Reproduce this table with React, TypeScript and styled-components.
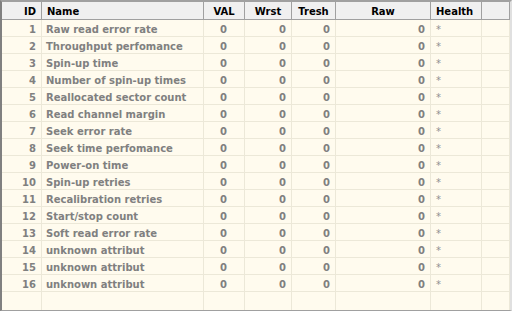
import React from "react";
import styled, { createGlobalStyle } from "styled-components";

const Global = createGlobalStyle`
  html, body { margin: 0; padding: 0; background: #f0f0f0; }
  body { width: 512px; height: 311px; overflow: hidden; }
`;

const COLS = "40px 162px 41px 47px 44px 95px 51px 1fr";

const Frame = styled.div`
  box-sizing: border-box;
  width: 512px;
  height: 311px;
  border-top: 2px solid #a0a0a0;
  border-left: 2px solid #808080;
  border-right: 2px solid #e0e0e0;
  border-bottom: 1px solid #a0a0a0;
  background: #fffbee;
  font-family: "DejaVu Sans", sans-serif;
  font-size: 10px;
  font-weight: bold;
  display: flex;
  flex-direction: column;
  overflow: hidden;
`;

const HeaderRow = styled.div`
  display: grid;
  grid-template-columns: ${COLS};
  height: 17px;
  background: #f0f0f0;
  border-bottom: 1px solid #a0a0a0;
`;

const HeadCell = styled.div<{ $align?: string }>`
  box-sizing: border-box;
  border-right: 1px solid #a0a0a0;
  color: #000;
  line-height: 17px;
  padding: 1px 5px 0;
  text-align: ${(p) => p.$align || "center"};
  white-space: nowrap;
  overflow: hidden;
`;

const Row = styled.div`
  display: grid;
  grid-template-columns: ${COLS};
  height: 17px;
  border-bottom: 1px solid #ece8d8;
  box-sizing: border-box;
`;

const Cell = styled.div<{ $align?: string }>`
  box-sizing: border-box;
  border-right: 1px solid #ece8d8;
  color: #808080;
  line-height: 12px;
  padding: 4px 5px 0 4px;
  text-align: ${(p) => p.$align || "right"};
  white-space: nowrap;
`;

const Star = styled.span`
  font-weight: normal;
  color: #909090;
  padding-left: 1px;
`;

const Filler = styled.div`
  flex: 1;
  display: grid;
  grid-template-columns: ${COLS};
`;

const FillCell = styled.div`
  border-right: 1px solid #ece8d8;
`;

const names = [
  "Raw read error rate",
  "Throughput perfomance",
  "Spin-up time",
  "Number of spin-up times",
  "Reallocated sector count",
  "Read channel margin",
  "Seek error rate",
  "Seek time perfomance",
  "Power-on time",
  "Spin-up retries",
  "Recalibration retries",
  "Start/stop count",
  "Soft read error rate",
  "unknown attribut",
  "unknown attribut",
  "unknown attribut",
];

export default function App() {
  return (
    <>
      <Global />
      <Frame>
        <HeaderRow>
          <HeadCell $align="right">ID</HeadCell>
          <HeadCell $align="left">Name</HeadCell>
          <HeadCell>VAL</HeadCell>
          <HeadCell>Wrst</HeadCell>
          <HeadCell>Tresh</HeadCell>
          <HeadCell>Raw</HeadCell>
          <HeadCell $align="left">Health</HeadCell>
          <HeadCell />
        </HeaderRow>
        {names.map((n, i) => (
          <Row key={i}>
            <Cell>{i + 1}</Cell>
            <Cell $align="left">{n}</Cell>
            <Cell $align="center">0</Cell>
            <Cell>0</Cell>
            <Cell>0</Cell>
            <Cell>0</Cell>
            <Cell $align="left">
              <Star>*</Star>
            </Cell>
            <Cell />
          </Row>
        ))}
        <Filler>
          {Array.from({ length: 8 }).map((_, i) => (
            <FillCell key={i} />
          ))}
        </Filler>
      </Frame>
    </>
  );
}
